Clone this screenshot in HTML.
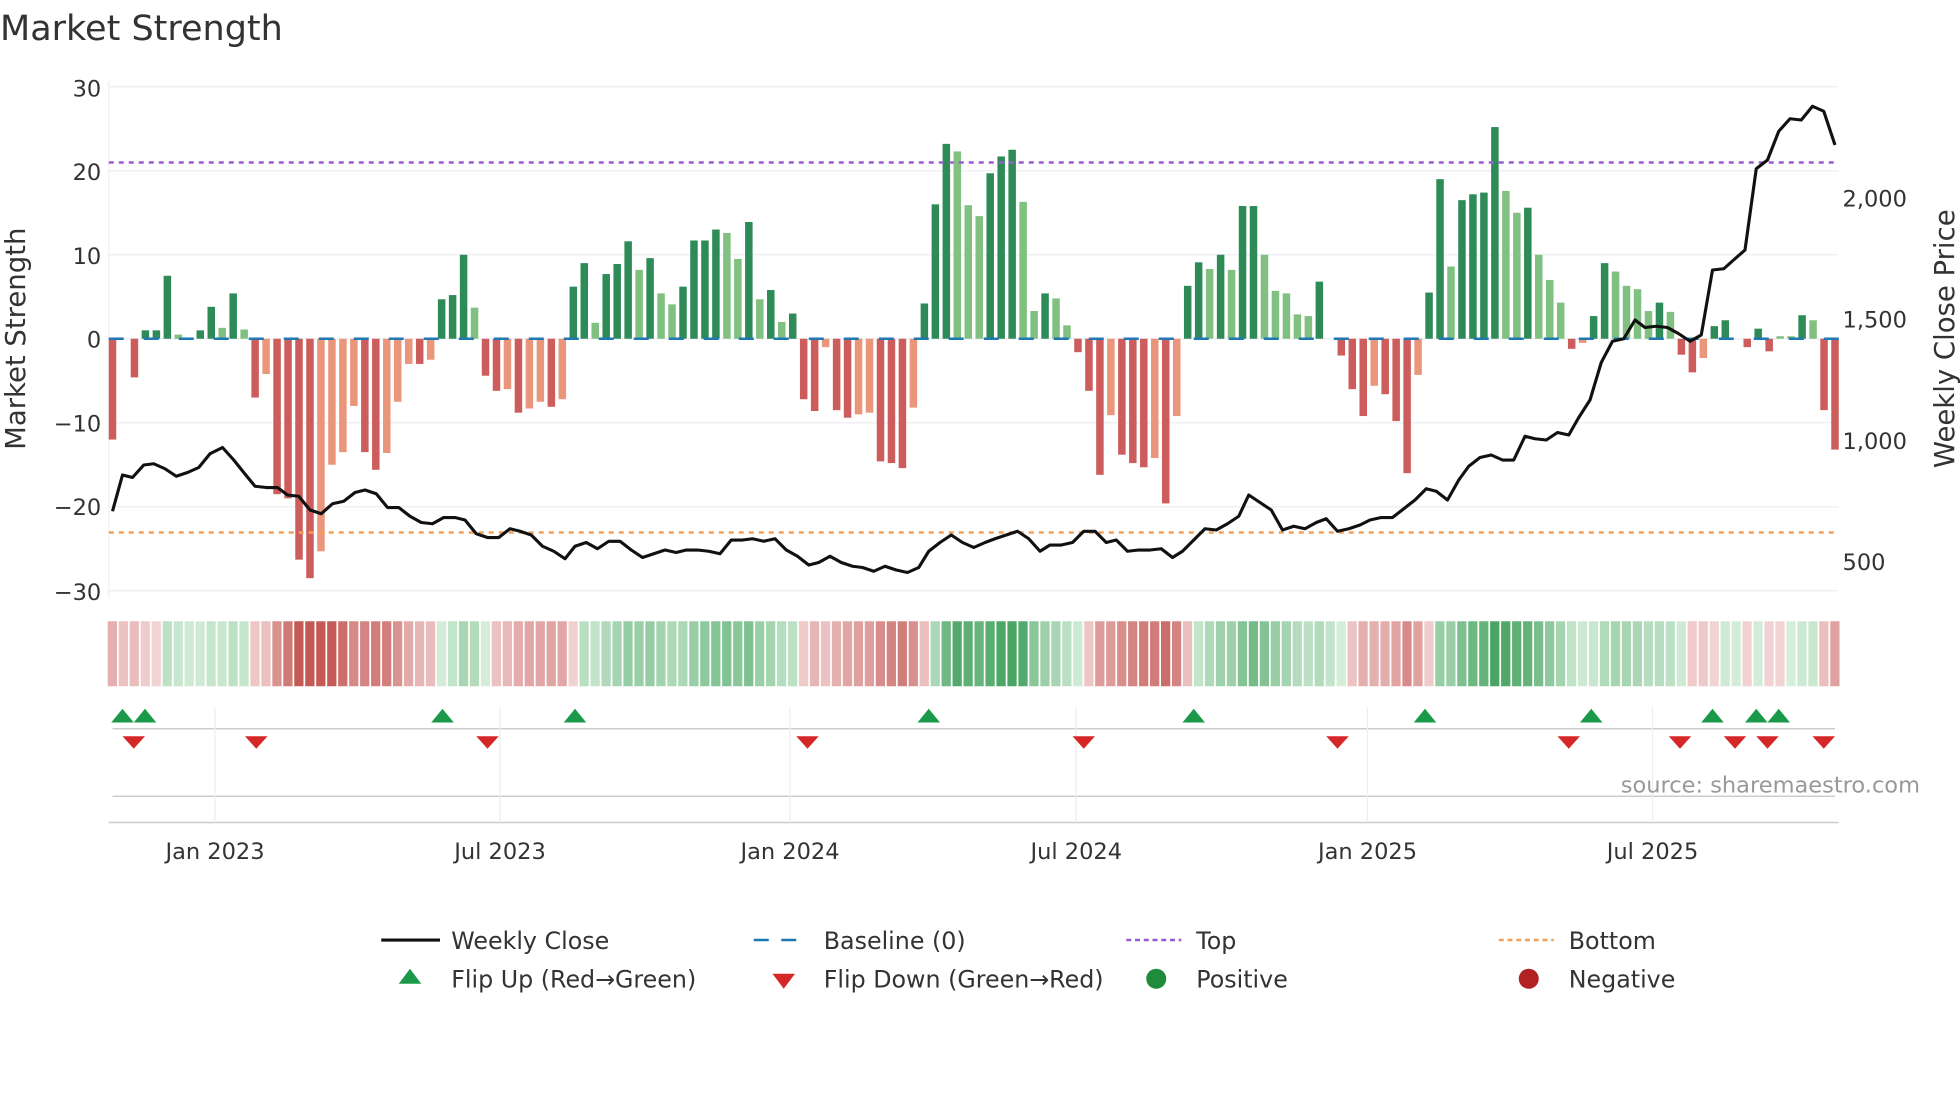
<!DOCTYPE html>
<html><head><meta charset="utf-8">
<style>
html,body{margin:0;padding:0;background:#fff;width:1960px;height:1102px;overflow:hidden}
svg{display:block}
text{font-family:"DejaVu Sans","Liberation Sans",sans-serif;fill:#333}
</style></head>
<body>
<svg id="s" width="1960" height="1102" viewBox="0 0 1568 881.6" xmlns="http://www.w3.org/2000/svg">
<text x="0" y="32" font-size="28">Market Strength</text>
<g id="grid"></g>
<g id="bars"></g>
<line x1="87" x2="1471" y1="271" y2="271" stroke="#1f77b4" stroke-width="2" stroke-dasharray="12 16"/>
<line x1="87" x2="1471" y1="130" y2="130" stroke="#9b59d6" stroke-width="2" stroke-dasharray="4 4"/>
<line x1="87" x2="1471" y1="426" y2="426" stroke="#f0a05a" stroke-width="2" stroke-dasharray="4 4"/>
<polyline id="price" fill="none" stroke="#111" stroke-width="2.5" stroke-linejoin="round"/>
<g id="heat"></g>
<g id="marks"></g>
<g font-size="18">
<text x="81" y="77" text-anchor="end">30</text>
<text x="81" y="144" text-anchor="end">20</text>
<text x="81" y="211" text-anchor="end">10</text>
<text x="81" y="278" text-anchor="end">0</text>
<text x="81" y="345" text-anchor="end">−10</text>
<text x="81" y="412" text-anchor="end">−20</text>
<text x="81" y="480" text-anchor="end">−30</text>
<text x="1474" y="165">2,000</text>
<text x="1474" y="262">1,500</text>
<text x="1474" y="359">1,000</text>
<text x="1474" y="456">500</text>
<text x="172" y="687" text-anchor="middle">Jan 2023</text>
<text x="400" y="687" text-anchor="middle">Jul 2023</text>
<text x="632" y="687" text-anchor="middle">Jan 2024</text>
<text x="861" y="687" text-anchor="middle">Jul 2024</text>
<text x="1094" y="687" text-anchor="middle">Jan 2025</text>
<text x="1322" y="687" text-anchor="middle">Jul 2025</text>
</g>
<text font-size="22" transform="translate(20,271) rotate(-90)" text-anchor="middle">Market Strength</text>
<text font-size="22" transform="translate(1563,271) rotate(-90)" text-anchor="middle">Weekly Close Price</text>
<text x="1536" y="634" font-size="18" text-anchor="end" style="fill:#999">source: sharemaestro.com</text>
<g font-size="19">
<line x1="305" x2="352" y1="752" y2="752" stroke="#111" stroke-width="2.5"/>
<text x="361" y="759">Weekly Close</text>
<line x1="603" x2="647" y1="752" y2="752" stroke="#1f77b4" stroke-width="2" stroke-dasharray="12 10"/>
<text x="659" y="759">Baseline (0)</text>
<line x1="901" x2="945" y1="752" y2="752" stroke="#9b59d6" stroke-width="2" stroke-dasharray="4 3"/>
<text x="957" y="759">Top</text>
<line x1="1199" x2="1243" y1="752" y2="752" stroke="#f0a05a" stroke-width="2" stroke-dasharray="4 3"/>
<text x="1255" y="759">Bottom</text>
<polygon points="319,787 337,787 328,775" fill="#1a9a48"/>
<text x="361" y="790">Flip Up (Red→Green)</text>
<polygon points="618,779 636,779 627,791" fill="#d62728"/>
<text x="659" y="790">Flip Down (Green→Red)</text>
<circle cx="925" cy="783" r="8" fill="#1e8c3a"/>
<text x="957" y="790">Positive</text>
<circle cx="1223" cy="783" r="8" fill="#b22222"/>
<text x="1255" y="790">Negative</text>
</g>
</svg>
<script>
var NS="http://www.w3.org/2000/svg";
function el(p,t,a){var e=document.createElementNS(NS,t);for(var k in a)e.setAttribute(k,a[k]);document.getElementById(p).appendChild(e);return e;}
// grid
[30,20,10,0,-10,-20,-30].forEach(function(v){var y=271-v*6.72;el("grid","line",{x1:87,x2:1471,y1:y,y2:y,stroke:"#eef0f3","stroke-width":1.2});});
el("grid","line",{x1:87,x2:87,y1:65,y2:478,stroke:"#eef0f3"});
el("grid","line",{x1:90,x2:1468,y1:583,y2:583,stroke:"#ccc","stroke-width":1.2});
el("grid","line",{x1:90,x2:1468,y1:637,y2:637,stroke:"#ccc","stroke-width":1.2});
el("grid","line",{x1:87,x2:1471,y1:658,y2:658,stroke:"#ccc","stroke-width":1.2});
[172,400,632,861,1094,1322].forEach(function(x){el("grid","line",{x1:x,x2:x,y1:566,y2:658,stroke:"#eee"});});
var d="R-12 0 R-4.6 D1 D1 D7.5 L0.5 0 D1 D3.8 L1.3 D5.4 L1.1 R-7 S-4.2 R-18.5 R-19 R-26.3 R-28.5 S-25.3 S-15 S-13.5 S-8 R-13.5 R-15.6 S-13.6 S-7.5 S-3 R-3 S-2.5 D4.7 D5.2 D10 L3.7 R-4.4 R-6.2 S-6 R-8.8 S-8.3 S-7.5 R-8.1 S-7.2 D6.2 D9 L1.9 D7.7 D8.9 D11.6 L8.2 D9.6 L5.4 L4.1 D6.2 D11.7 D11.7 D13 L12.6 L9.5 D13.9 L4.7 D5.8 L2 D3 R-7.2 R-8.6 S-1 R-8.5 R-9.4 S-9 S-8.8 R-14.6 R-14.8 R-15.4 S-8.2 D4.2 D16 D23.2 L22.3 L15.9 L14.6 D19.7 D21.7 D22.5 L16.3 L3.3 D5.4 L4.8 L1.6 R-1.6 R-6.2 R-16.2 S-9.1 R-13.8 R-14.8 R-15.3 S-14.2 R-19.6 S-9.2 D6.3 D9.1 L8.3 D10 L8.2 D15.8 D15.8 L10 L5.7 L5.4 L2.9 L2.7 D6.8 0 R-2 R-6 R-9.2 S-5.6 R-6.6 R-9.8 R-16 S-4.3 D5.5 D19 L8.6 D16.5 D17.2 D17.4 D25.2 L17.6 L15 D15.6 L10 L7 L4.3 R-1.2 S-0.5 D2.7 D9 L8 L6.3 L5.9 L3.3 D4.3 L3.2 R-1.9 R-4 S-2.3 D1.5 D2.2 0 R-1 D1.2 R-1.5 L0.3 L0.3 D2.8 L2.2 R-8.5 R-13.2".split(" ");
var n=d.length,sp=(1468-90)/(n-1);
var col={D:"#2e8b57",L:"#80c080",R:"#cd5c5c",S:"#e9967a"};
var sm=0;
d.forEach(function(t,i){
 var c=t[0],v=c==="0"?0:parseFloat(t.slice(1));var x=90+i*sp;
 if(v!==0){var h=Math.abs(v)*6.72;el("bars","rect",{x:x-3,y:v>0?271-h:271,width:6,height:h,fill:col[c]});}
 sm=sm*0.5+v*0.5;var a=Math.min(Math.abs(sm)/20,1);
 var fill;
 if(sm>=0){var r=Math.round(214-(214-74)*a),g=Math.round(238-(238-165)*a),b=Math.round(218-(218-100)*a);fill="rgb("+r+","+g+","+b+")";}
 else{var r2=Math.round(242-(242-196)*a),g2=Math.round(212-(212-90)*a),b2=Math.round(212-(212-86)*a);fill="rgb("+r2+","+g2+","+b2+")";}
 el("heat","rect",{x:x-3.8,y:497,width:7.4,height:52,fill:fill});
});
var p="90,409 98,380 106,382 115,372 123,371 132,375 141,381 150,378 159,374 168,363 178,358 187,368 195,378 204,389 213,390 222,390 230,396 239,397 248,408 257,411 266,403 275,401 284,394 292,392 301,395 310,406 319,406 328,413 337,418 346,419 355,414 364,414 372,416 381,427 390,430 399,430 408,423 416,425 425,428 434,437 443,441 452,447 460,437 469,434 478,439 487,433 496,433 505,440 514,446 523,443 532,440 541,442 549,440 558,440 567,441 576,443 585,432 594,432 602,431 611,433 620,431 629,440 638,445 647,452 655,450 664,445 673,450 682,453 690,454 699,457 708,453 717,456 726,458 735,454 743,441 752,434 761,428 770,434 779,438 788,434 796,431 805,428 814,425 823,431 832,441 840,436 849,436 858,434 867,425 876,425 885,434 893,432 902,441 911,440 920,440 929,439 938,446 946,441 955,432 964,423 973,424 982,419 991,413 999,396 1008,402 1017,408 1026,424 1035,421 1044,423 1053,418 1061,415 1070,425 1079,423 1088,420 1096,416 1105,414 1114,414 1123,407 1132,400 1141,391 1149,393 1158,400 1167,384 1175,373 1184,366 1193,364 1202,368 1211,368 1220,349 1228,351 1237,352 1246,346 1255,348 1263,334 1272,320 1281,290 1290,273 1299,271 1308,256 1316,262 1325,261 1334,262 1343,267 1352,273 1361,268 1370,216 1379,215 1388,207 1396,200 1405,135 1414,128 1423,105 1432,95 1441,96 1450,85 1459,89 1468,116";
document.getElementById("price").setAttribute("points",p);
[98,116,354,460,743,955,1140,1273,1370,1405,1423].forEach(function(x){el("marks","polygon",{points:(x-9)+",578 "+(x+9)+",578 "+x+",567",fill:"#1a9a48"});});
[107,205,390,646,867,1070,1255,1344,1388,1414,1459].forEach(function(x){el("marks","polygon",{points:(x-9)+",589 "+(x+9)+",589 "+x+",599",fill:"#d62728"});});
</script>
</body></html>
